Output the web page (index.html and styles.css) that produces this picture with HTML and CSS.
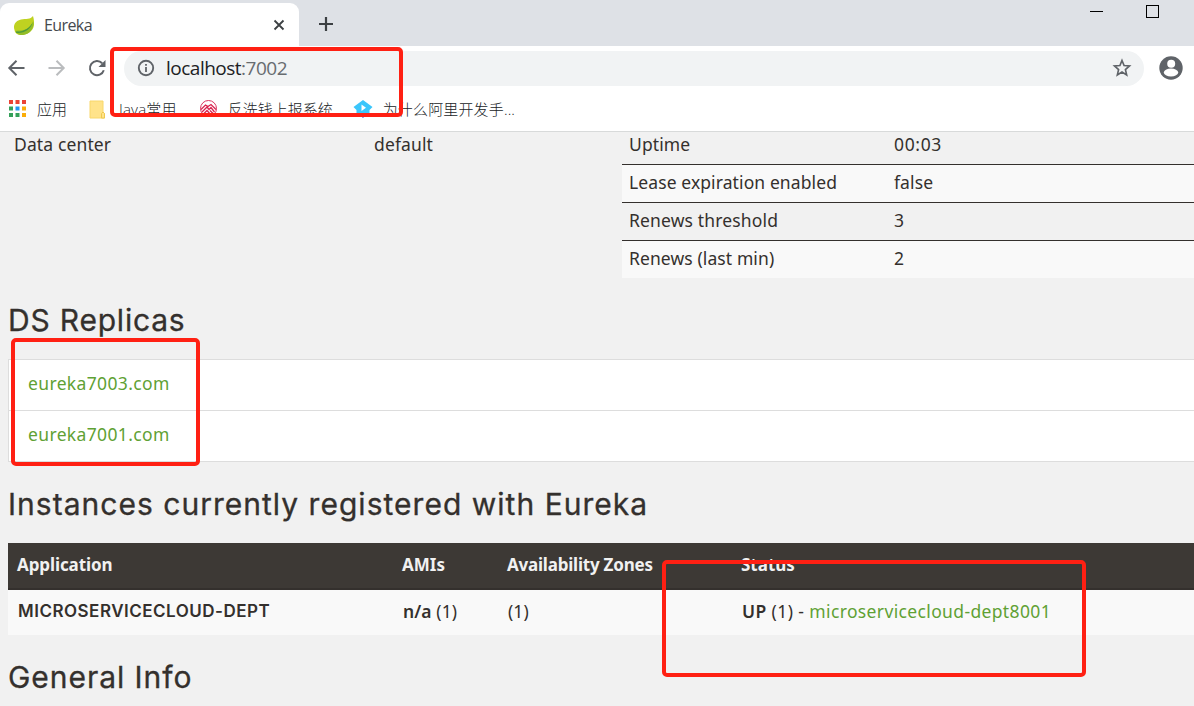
FILE: index.html
```html
<!DOCTYPE html>
<html lang="zh-CN">
<head>
<meta charset="utf-8">
<title>Eureka</title>
<link rel="stylesheet" href="styles.css">
</head>
<body>
<header class="browser">
  <div class="tabstrip">
    <div class="tab">
      <svg class="leaf" width="22" height="20" viewBox="0 0 22 20"><path d="M20 0C17.500 3.500 13 2.500 8 3.500C2 5 0 9 1.500 14C2 17.500 4.500 19 8 19C15 19 22 14 21 6C21 3.500 20.500 2 20 0Z" fill="#bfd221"/><path d="M2 14.500C4.500 19 8 19.200 10 19C16 18.500 21.500 13 20.500 5C19.500 11 13 14.500 7 14.500C5 14.500 3 15 2 14.500Z" fill="#93bd28"/><path d="M3 15.500C10 16 17 12.500 20 5.500C18.500 13.500 10 18 3 16.800Z" fill="#4f9b3c"/></svg>
      <span class="tab-title">Eureka</span>
      <svg class="tab-close" width="12" height="12" viewBox="0 0 12 12"><path d="M1.500 1.500L10.500 10.500M10.500 1.500L1.500 10.500" stroke="#3c4043" stroke-width="1.800"/></svg>
    </div>
    <div class="newtab"><svg width="16" height="16" viewBox="0 0 16 16"><path d="M8 1V15M1 8H15" stroke="#3c4043" stroke-width="2.200"/></svg></div>
    <div class="window-buttons">
      <svg width="14" height="13" viewBox="0 0 14 13"><path d="M0 6.500H13" stroke="#000"/></svg>
      <svg width="13" height="13" viewBox="0 0 13 13"><rect x=".5" y=".5" width="12" height="12" fill="none" stroke="#000"/></svg>
    </div>
  </div>
  <div class="toolbar">
    <svg class="back" width="18" height="18" viewBox="0 0 18 18"><path d="M17.500 9H2.500M9.500 1.800L2.300 9L9.500 16.200" fill="none" stroke="#5f6368" stroke-width="2"/></svg>
    <svg class="forward" width="18" height="18" viewBox="0 0 18 18"><path d="M.5 9H15.500M8.500 1.800L15.700 9L8.500 16.200" fill="none" stroke="#babcbe" stroke-width="2"/></svg>
    <svg class="reload" width="18" height="18" viewBox="0 0 18 18"><path d="M15.800 11.200A7.100 7.100 0 1 1 14.200 4.200" fill="none" stroke="#5f6368" stroke-width="2"/><path d="M17.500 1V8H10.500Z" fill="#5f6368"/></svg>
    <div class="omnibox">
      <svg width="18" height="18" viewBox="0 0 18 18"><circle cx="9" cy="9" r="7.200" fill="none" stroke="#5f6368" stroke-width="1.900"/><path d="M9 8V13M9 5V6.700" stroke="#5f6368" stroke-width="1.800"/></svg>
      <span class="url">localhost<span class="port">:7002</span></span>
      <svg class="star" width="20" height="20" viewBox="0 0 24 24"><path d="M12 3L14.500 9L21 9.600L16.100 13.900L17.600 20.300L12 16.900L6.400 20.300L7.900 13.900L3 9.600L9.500 9Z" fill="none" stroke="#5f6368" stroke-width="2"/></svg>
    </div>
    <svg class="profile" width="24" height="24" viewBox="0 0 24 24"><circle cx="12" cy="12" r="11.700" fill="#5f6368"/><circle cx="12.200" cy="7.700" r="4" fill="#fff"/><ellipse cx="12" cy="16.500" rx="7.200" ry="4" fill="#fff"/></svg>
  </div>
  <nav class="bookmarks">
    <svg class="apps" width="17" height="17" viewBox="0 0 17 17"><path d="M0 0h4v4H0zM6.500 0h4v4h-4zM13 0h4v4h-4z" fill="#ea4335"/><path d="M0 6.500h4v4H0zM0 13h4v4H0zM6.500 13h4v4h-4z" fill="#34a05a"/><path d="M6.500 6.500h4v4h-4z" fill="#2196f3"/><path d="M13 6.500h4v4h-4zM13 13h4v4h-4z" fill="#fbad08"/></svg>
    <span class="bm bm-apps">应用</span>
    <svg class="folder" width="17" height="19" viewBox="0 0 17 19"><path d="M1 1H14V12L15.500 13.500V18H1Z" fill="#ffe38a" stroke="#f8d76b"/><path d="M12.500 18V13.500L14 12L15.500 13.500V18Z" fill="#ffe38a" stroke="#efc84e"/></svg>
    <span class="bm bm-java">Java常用</span>
    <svg class="aia" width="17" height="17" viewBox="0 0 17 17"><circle cx="8.500" cy="8.500" r="8" fill="#fff" stroke="#d9365f"/><path d="M1 9.500L5.500 5L8 6.500L11 4.500L16 9.500M2 12L7 7L9 9.500L11 7.500L14.500 12M4 13.500L7 10.500L11 15M10 10.500L13 13.500" fill="none" stroke="#d9244f" stroke-width="1.300"/></svg>
    <span class="bm bm-report">反洗钱上报系统</span>
    <svg class="play" width="20" height="20" viewBox="0 0 20 20"><path d="M10 1L19.500 8L16.500 11V15H13L10 19L6.500 15H3.500V11L.5 8Z" fill="#3bc6fb"/><path d="M6.500 15H13L10 19Z" fill="#7957d5"/><path d="M8.500 5.500L13 8.700L8.500 12Z" fill="#fff"/></svg>
    <span class="bm bm-ali">为什么阿里开发手...</span>
  </nav>
</header>
<main class="page">
  <section class="status">
    <div class="environment"><span class="key t-data">Data center</span><span class="t-default">default</span></div>
    <div class="metrics">
      <div class="metric"><span class="t-uptime">Uptime</span><span class="t-time">00:03</span></div>
      <div class="metric alt"><span class="t-lease">Lease expiration enabled</span><span class="t-false">false</span></div>
      <div class="metric"><span class="t-threshold">Renews threshold</span><span class="t-digit">3</span></div>
      <div class="metric alt"><span class="t-last">Renews (last min)</span><span class="t-digit">2</span></div>
    </div>
  </section>
  <h1 class="heading replicas-heading"><span class="t-ds">DS Replicas</span></h1>
  <div class="replicas">
    <div class="replica"><a class="t-eureka">eureka7003.com</a></div>
    <div class="replica"><a class="t-eureka">eureka7001.com</a></div>
  </div>
  <h1 class="heading instances-heading"><span class="t-inst">Instances currently registered with Eureka</span></h1>
  <div class="instances">
    <div class="row head"><span class="t-app">Application</span><span class="t-amis">AMIs</span><span class="t-zones">Availability Zones</span><span class="t-status">Status</span></div>
    <div class="row"><b class="t-micro">MICROSERVICECLOUD-DEPT</b><span class="t-na"><b>n/a</b> (1)</span><span class="t-one">(1)</span><span class="status-cell"><span class="t-up"><b>UP</b> (1) -</span><a class="t-dept">microservicecloud-dept8001</a></span></div>
  </div>
  <h1 class="heading general-heading"><span class="t-general">General Info</span></h1>
</main>
<div class="mark mark-url"></div>
<div class="mark mark-replicas"></div>
<div class="mark mark-status"></div>
</body>
</html>
```
FILE: styles.css
```css
* { box-sizing: border-box; }
body { margin: 0; width: 1194px; height: 706px; overflow: hidden; position: relative; background: #f1f1f1; color: #34302d; font-family: "Noto Sans", sans-serif; font-size: 17.5px; }
svg { display: block; flex: none; }
b { font-weight: 600; }
.browser { height: 132px; background: #fff; border-bottom: 1px solid #d8dada; font-family: "Open Sans", "Noto Sans CJK SC", sans-serif; }
.tabstrip { height: 46px; display: flex; background: #dee1e6; }
.tab { width: 299px; height: 43px; margin-top: 3px; padding: 0 14px 0 13px; display: flex; align-items: center; background: #fff; border-radius: 9px 9px 0 0; }
.leaf { margin-top: 2px; }
.tab-title { margin-left: 9px; padding-top: 1px; font-size: 16px; letter-spacing: -.6px; color: #45494d; }
.tab-close { margin-left: auto; }
.newtab { width: 60px; padding: 16px 0 0 19px; }
.window-buttons { margin-left: auto; padding: 5px 35px 0 0; display: flex; gap: 42px; }
.toolbar { height: 44px; display: flex; align-items: center; padding-left: 7px; }
.forward { margin-left: 23px; }
.reload { margin-left: 22px; }
.omnibox { width: 1020px; height: 35px; margin-left: 18px; padding: 0 12px 0 13px; display: flex; align-items: center; border-radius: 18px; background: #f1f3f4; }
.url { margin-left: 11px; font-size: 19px; letter-spacing: -.5px; color: #202124; }
.port { color: #686c70; }
.star { margin-left: auto; }
.profile { margin-left: 15px; }
.bookmarks { height: 38px; padding-left: 9px; display: flex; align-items: center; font-size: 15px; font-weight: 300; color: #202326; white-space: nowrap; }
.apps { margin-top: -1px; }
.bm { line-height: 22px; }
.bm-apps { margin-left: 11px; }
.folder { margin-left: 22px; }
.bm-java { margin-left: 13px; letter-spacing: .2px; }
.aia { margin-left: 23px; margin-top: -2px; }
.bm-report { margin-left: 11px; }
.play { margin-left: 20px; }
.bm-ali { margin-left: 10px; letter-spacing: .15px; }
.page { height: 574px; white-space: nowrap; }
.status { height: 146px; display: flex; }
.environment { width: 622px; height: 23px; display: flex; align-items: center; padding-left: 14px; }
.key { width: 360px; }
.metrics { flex: 1; }
.metric { height: 38px; display: grid; grid-template-columns: 265px 1fr; align-items: center; padding: 0 0 4px 7px; border-top: 1px solid #34302d; }
.metric:first-child { height: 32px; border: 0; padding-bottom: 10px; }
.alt { background: #f9f9f9; }
.heading { margin: 0; padding-left: 8px; font: 400 30px/40px Inter, sans-serif; -webkit-text-stroke: .3px #34302d; }
.replicas-heading { padding-top: 22px; height: 81px; }
.replicas { margin-left: 8px; border: 1px solid #ddd; border-right: 0; background: #fff; }
.replica { height: 50px; padding: 0 0 4px 19px; display: flex; align-items: center; }
.replica + .replica { height: 51px; padding-bottom: 4px; border-top: 1px solid #ddd; }
a { color: #5fa134; }
.instances-heading { padding-top: 22px; height: 81px; }
.instances { margin-left: 8px; }
.row { height: 45px; padding: 0 0 4px 10px; display: grid; grid-template-columns: 385px 105px 234px 1fr; align-items: center; background: #f9f9f9; }
.head { height: 47px; padding: 0 0 3px 9px; background: #3d3935; border-bottom: 2px solid #34302d; color: #f1f1f1; font-size: 17px; font-weight: 700; }
.status-cell { display: flex; gap: 5px; }
.general-heading { padding-top: 22px; }

/* Tracking for individual labels */
.t-data, .t-default { letter-spacing: .13px; }
.t-uptime, .t-lease, .t-last, .t-false { letter-spacing: .1px; }
.t-threshold { letter-spacing: .15px; }
.t-time { letter-spacing: .65px; }
.t-ds { letter-spacing: .8px; }
.t-inst { letter-spacing: 1.02px; }
.t-general { letter-spacing: .95px; }
.t-eureka { letter-spacing: .36px; }
.t-app { letter-spacing: -.1px; }
.t-zones { letter-spacing: -.22px; }
.t-micro { font: 600 17px/24px Inter, sans-serif; letter-spacing: .5px; }
.t-na, .t-one { letter-spacing: .1px; }
.t-up { letter-spacing: .4px; }
.t-dept { letter-spacing: .36px; }

.mark { position: absolute; border: 4px solid #ff2013; border-radius: 5px; }
.mark-url { left: 110px; top: 47px; width: 293px; height: 70px; }
.mark-replicas { left: 11px; top: 338px; width: 189px; height: 128px; }
.mark-status { left: 662px; top: 560px; width: 424px; height: 117px; }
```
